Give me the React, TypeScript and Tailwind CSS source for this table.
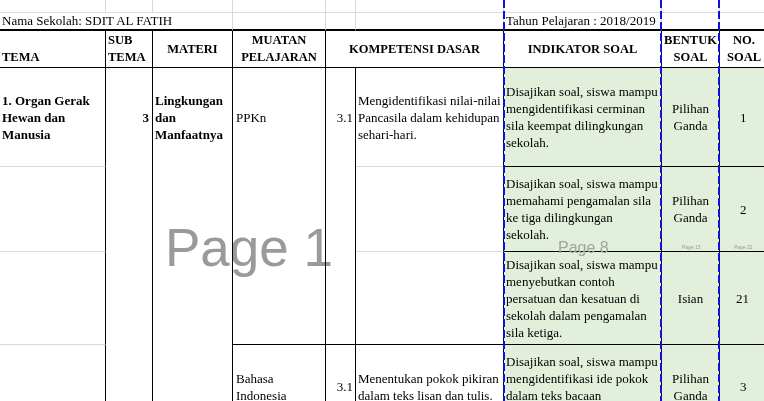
import React from 'react';

const Cell = ({ className = '', children }: { className?: string; children?: React.ReactNode }) => (
  <div className={`flex overflow-visible whitespace-nowrap ${className}`}>{children}</div>
);

const Lines = ({ lines, className = '' }: { lines: string[]; className?: string }) => (
  <div className={className}>
    {lines.map((l, i) => (
      <div key={i}>{l}</div>
    ))}
  </div>
);

const grid = 'border-r border-b border-[#d9d9d9]';
const box = 'border-r border-b border-black';
const head = 'border-r border-b border-black font-bold text-[12.5px]';
const green = 'bg-[#e2efda] border-r border-b border-black items-center';

const App = () => {
  return (
    <div className="relative w-[764px] h-[401px] overflow-hidden bg-white text-black font-['Liberation_Serif',serif] text-[13px] leading-[17px]">
      {/* page label behind the sheet */}
      <div className="absolute left-[165px] top-[221px] text-[53px] leading-none text-[#9a9a9a] font-['Liberation_Sans',sans-serif] mix-blend-multiply">
        Page 1
      </div>

      <div className="relative grid grid-cols-[106px_47px_80px_93px_30px_148px_158px_58px_60px] grid-rows-[13px_18px_37px_99px_85px_93px_84px]">
        {/* row 1 */}
        <Cell className={grid} />
        <Cell className={grid} />
        <Cell className={grid} />
        <Cell className={grid} />
        <Cell className={grid} />
        <Cell className={grid} />
        <Cell className={grid} />
        <Cell className={grid} />
        <Cell className={grid} />

        {/* row 2 */}
        <Cell className="col-span-3 border-r border-r-[#d9d9d9] border-b-2 border-b-black items-end px-[2px] leading-[16px]">
          Nama Sekolah: SDIT AL FATIH
        </Cell>
        <Cell className="border-r border-r-[#d9d9d9] border-b-2 border-b-black" />
        <Cell className="border-r border-r-[#d9d9d9] border-b-2 border-b-black" />
        <Cell className="border-r border-r-[#d9d9d9] border-b-2 border-b-black" />
        <Cell className="border-r border-r-[#d9d9d9] border-b-2 border-b-black items-end px-[2px] leading-[16px]">
          Tahun Pelajaran : 2018/2019
        </Cell>
        <Cell className="border-r border-r-[#d9d9d9] border-b-2 border-b-black" />
        <Cell className="border-r border-r-[#d9d9d9] border-b-2 border-b-black" />

        {/* row 3: header */}
        <Cell className={`${head} items-end px-[2px] pb-[1px]`}>TEMA</Cell>
        <Cell className={`${head} items-end px-[2px] pb-[1px]`}>
          <Lines lines={['SUB', 'TEMA']} />
        </Cell>
        <Cell className={`${head} items-center justify-center`}>MATERI</Cell>
        <Cell className={`${head} items-center justify-center`}>
          <Lines lines={['MUATAN', 'PELAJARAN']} className="text-center" />
        </Cell>
        <Cell className={`col-span-2 ${head} items-center justify-center`}>KOMPETENSI DASAR</Cell>
        <Cell className={`${head} items-center justify-center`}>INDIKATOR SOAL</Cell>
        <Cell className={`${head} items-center justify-center`}>
          <Lines lines={['BENTUK', 'SOAL']} className="text-center" />
        </Cell>
        <Cell className={`${head} items-center justify-start pl-[7px]`}>
          <Lines lines={['NO.', 'SOAL']} className="text-center" />
        </Cell>

        {/* row 4 */}
        <Cell className="border-r border-r-black border-b border-b-[#d9d9d9] items-center px-[2px] font-bold">
          <Lines lines={['1. Organ Gerak', 'Hewan dan', 'Manusia']} />
        </Cell>
        <Cell className="border-r border-black items-center justify-end pr-[3px] font-bold">3</Cell>
        <Cell className="border-r border-black items-center px-[2px] font-bold">
          <Lines lines={['Lingkungan', 'dan', 'Manfaatnya']} />
        </Cell>
        <Cell className="border-r border-black items-center px-[3px]">PPKn</Cell>
        <Cell className="border-r border-black items-center justify-end pr-[2px]">3.1</Cell>
        <Cell className="border-r border-r-black border-b border-b-[#d9d9d9] items-center px-[2px]">
          <Lines lines={['Mengidentifikasi nilai-nilai', 'Pancasila dalam kehidupan', 'sehari-hari.']} />
        </Cell>
        <Cell className={`${green} px-[2px]`}>
          <Lines lines={['Disajikan soal, siswa mampu', 'mengidentifikasi cerminan', 'sila keempat dilingkungan', 'sekolah.']} />
        </Cell>
        <Cell className={`${green} justify-center`}>
          <Lines lines={['Pilihan', 'Ganda']} className="text-center" />
        </Cell>
        <Cell className={`${green} justify-start pl-[20px]`}>1</Cell>

        {/* row 5 */}
        <Cell className="border-r border-r-black border-b border-b-[#d9d9d9]" />
        <Cell className="border-r border-black" />
        <Cell className="border-r border-black" />
        <Cell className="border-r border-black" />
        <Cell className="border-r border-black" />
        <Cell className="border-r border-r-black border-b border-b-[#d9d9d9]" />
        <Cell className={`${green} px-[2px]`}>
          <Lines lines={['Disajikan soal, siswa mampu', 'memahami pengamalan sila', 'ke tiga dilingkungan', 'sekolah.']} />
        </Cell>
        <Cell className={`${green} justify-center`}>
          <Lines lines={['Pilihan', 'Ganda']} className="text-center" />
        </Cell>
        <Cell className={`${green} justify-start pl-[20px]`}>2</Cell>

        {/* row 6 */}
        <Cell className="border-r border-r-black border-b border-b-[#d9d9d9]" />
        <Cell className="border-r border-black" />
        <Cell className="border-r border-black" />
        <Cell className={box} />
        <Cell className={box} />
        <Cell className={box} />
        <Cell className={`${green} px-[2px]`}>
          <Lines
            lines={[
              'Disajikan soal, siswa mampu',
              'menyebutkan contoh',
              'persatuan dan kesatuan di',
              'sekolah dalam pengamalan',
              'sila ketiga.',
            ]}
          />
        </Cell>
        <Cell className={`${green} justify-center`}>Isian</Cell>
        <Cell className={`${green} justify-start pl-[16px]`}>21</Cell>

        {/* row 7 */}
        <Cell className="border-r border-r-black border-b border-b-[#d9d9d9]" />
        <Cell className="border-r border-black" />
        <Cell className="border-r border-black" />
        <Cell className={`${box} items-center px-[3px]`}>
          <Lines lines={['Bahasa', 'Indonesia']} />
        </Cell>
        <Cell className={`${box} items-center justify-end pr-[2px]`}>3.1</Cell>
        <Cell className={`${box} items-center px-[2px]`}>
          <Lines lines={['Menentukan pokok pikiran', 'dalam teks lisan dan tulis.']} />
        </Cell>
        <Cell className={`${green} px-[2px]`}>
          <Lines lines={['Disajikan soal, siswa mampu', 'mengidentifikasi ide pokok', 'dalam teks bacaan', 'tersebut.']} />
        </Cell>
        <Cell className={`${green} justify-center`}>
          <Lines lines={['Pilihan', 'Ganda']} className="text-center" />
        </Cell>
        <Cell className={`${green} justify-start pl-[20px]`}>3</Cell>
      </div>

      {/* page break overlay */}
      <div className="absolute left-[558px] top-[240px] text-[16px] leading-none text-[#a3a3a3] font-['Liberation_Sans',sans-serif]">
        Page 8
      </div>
      <div className="absolute left-[682px] top-[245px] text-[5px] leading-none text-[#9a9a9a] font-['Liberation_Sans',sans-serif]">
        Page 15
      </div>
      <div className="absolute left-[734px] top-[245px] text-[5px] leading-none text-[#9a9a9a] font-['Liberation_Sans',sans-serif]">
        Page 22
      </div>
      <div className="absolute top-0 bottom-0 left-[503px] w-[2px] bg-[repeating-linear-gradient(to_bottom,#1010e0_0px,#1010e0_8px,transparent_8px,transparent_11px)]" />
      <div className="absolute top-0 bottom-0 left-[660px] w-[2px] bg-[repeating-linear-gradient(to_bottom,#1010e0_0px,#1010e0_8px,transparent_8px,transparent_11px)]" />
      <div className="absolute top-0 bottom-0 left-[718px] w-[2px] bg-[repeating-linear-gradient(to_bottom,#1010e0_0px,#1010e0_8px,transparent_8px,transparent_11px)]" />
    </div>
  );
};

export default App;
